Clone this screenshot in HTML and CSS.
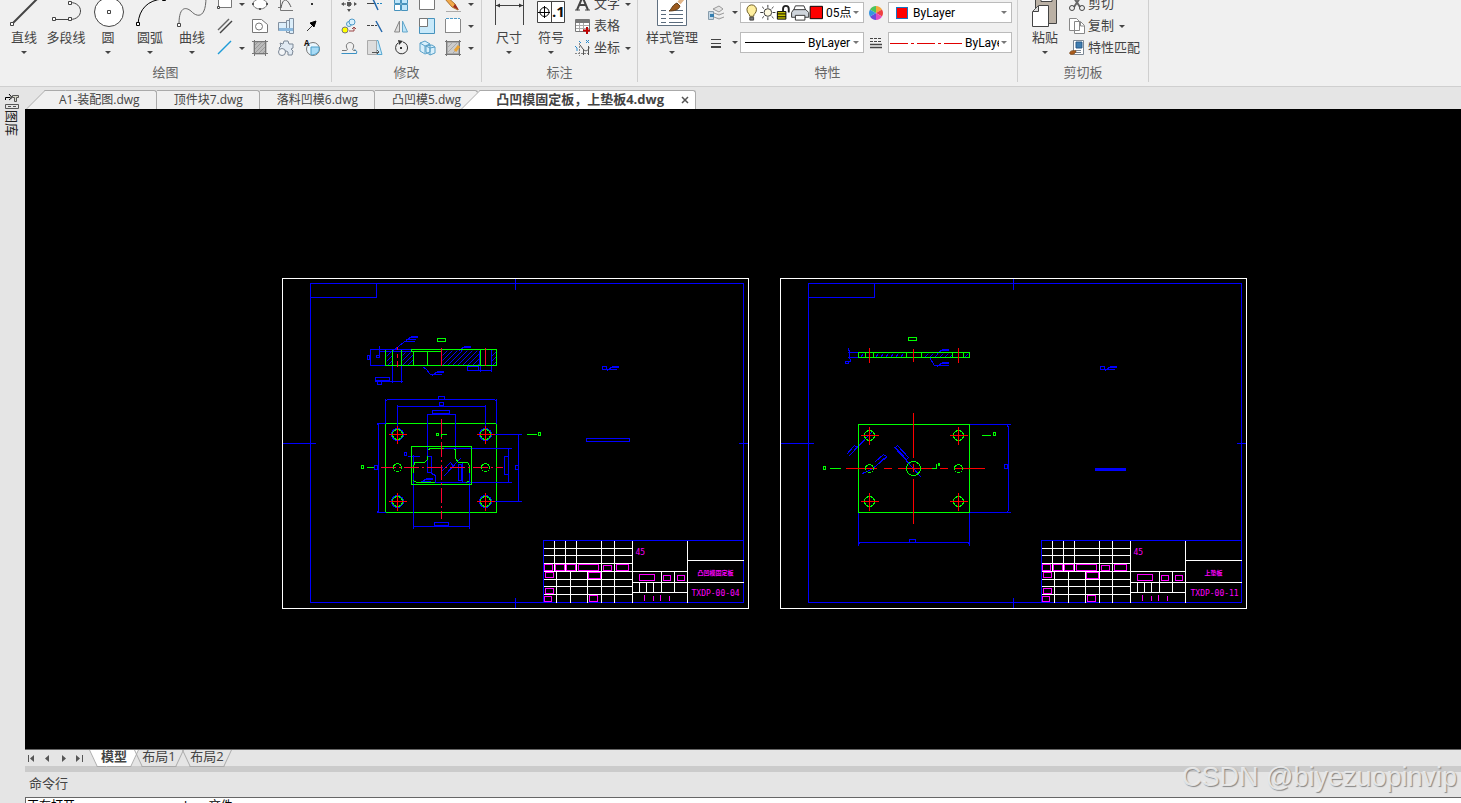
FILE: index.html
```
<!DOCTYPE html>
<html lang="zh-CN">
<head>
  <meta charset="UTF-8">
  <meta name="viewport" content="width=device-width, initial-scale=1.0">
  <title>凸凹模固定板，上垫板4.dwg</title>
  <link rel="stylesheet" href="styles.css">
</head>
<body>
<header class="ribbon">
  <section class="group group-draw">
    <div class="tools">
      <button class="big"><svg viewBox="0 0 42 32"><path d="M9 29L36 2" stroke-width="2"/><path class="node" d="M7.500 27.500h3v3h-3zM34.500 1.500h3v3h-3z"/></svg><span>直线</span><i class="arrow"></i></button>
      <button class="big"><svg viewBox="0 0 42 32"><path d="M9 24.500H25C39 24.500 39 7.500 25 7.500"/><path class="node" d="M7.500 22.500h3v3h-3zM23.500 22.500h3v3h-3zM23.500 6.500h3v3h-3z"/></svg><span>多段线</span></button>
      <button class="big"><svg viewBox="0 0 42 32"><circle cx="22" cy="17" r="14.500" fill="#fff"/><path class="node" d="M20.500 15.500h3v3h-3z"/></svg><span>圆</span><i class="arrow"></i></button>
      <button class="big"><svg viewBox="0 0 42 32"><path d="M9 29C10 14 19 5 34 4" stroke="#000"/><path class="node black" d="M7.500 27.500h3v3h-3zM33.500 2.500h3v3h-3z"/></svg><span>圆弧</span><i class="arrow"></i></button>
      <button class="big"><svg viewBox="0 0 42 32"><path d="M8 29C8 10 16 12 21 17S35 24 35 2" stroke="#666"/><path class="node" d="M6.500 28.500h3v3h-3z"/></svg><span>曲线</span><i class="arrow"></i></button>
      <div class="grid grid-draw">
        <button aria-label="矩形"><svg viewBox="0 0 20 20"><path d="M3.500 2.500h13v11h-13z" fill="#fff" stroke="#777"/><path class="node" d="M2.500 12.500h2v2h-2zM15.500 1.500h2v2h-2z"/></svg></button><i class="arrow"></i>
        <button aria-label="椭圆"><svg viewBox="0 0 20 20"><ellipse cx="10" cy="10" rx="7" ry="5" fill="#fff" stroke="#777"/><path d="M9 14h2v2H9zM16 9h2v2h-2zM2 9h2v2H2z" fill="#555" stroke="none"/></svg></button>
        <button aria-label="公式曲线"><svg viewBox="0 0 20 20"><path d="M4.500 2v14.500H17M2 13.500h3" stroke="#777"/><path d="M5 14C7 3 11 4 15 13" stroke="#555"/></svg></button>
        <button aria-label="点"><svg viewBox="0 0 20 20"><path d="M9 9h2v2H9z" fill="#333" stroke="none"/></svg></button>
        <button aria-label="平行线"><svg viewBox="0 0 20 20"><path d="M3 14L14 3" stroke="#666" stroke-width="1.500"/><path d="M5 17L17 5" stroke="#444" stroke-width="1.500"/></svg></button><i></i>
        <button aria-label="轮廓"><svg viewBox="0 0 20 20"><path d="M2.500 3.500h9l6 5v8h-15z" fill="#fff" stroke="#777"/><circle cx="9" cy="10.500" r="3.500" stroke="#777"/></svg></button>
        <button aria-label="螺栓"><svg viewBox="0 0 20 20"><path d="M2.500 6.500h8v8h-8zM10.500 4.500h3v12h-3zM13.500 2.500h4v15h-4z" fill="#dceefa" stroke="#8290a0"/><path d="M3 12h14v3H3z" fill="#8bb8dd" stroke="none"/></svg></button>
        <button aria-label="箭头"><svg viewBox="0 0 20 20"><path d="M5 15l6-6" stroke="#333"/><path d="M14 5l-2 6-4-4z" fill="#000" stroke="#000"/></svg></button>
        <button aria-label="构造线"><svg viewBox="0 0 20 20"><path d="M3 16L16 3" stroke="#1e9bd7" stroke-width="1.500"/></svg></button><i class="arrow"></i>
        <button aria-label="剖面线"><svg viewBox="0 0 20 20"><path d="M4 4h12v12H4z" fill="#bbb" stroke="#999"/><path d="M4 8l4-4M4 12l8-8M4 16L16 4M8 16l8-8M12 16l4-4" stroke="#999"/><path d="M4.500 2v16M15.500 2v16M2 3.500h16M2 15.500h16" stroke="#777"/></svg></button>
        <button aria-label="齿轮"><svg viewBox="0 0 20 20"><path d="M4 5l3 1 1-3h4l1 3h4v4l-2 1 2 2-1 4h-4v-3c-3-2-5-2-7-1l-2-3 2-2z" fill="#e1eaf3" stroke="#7b8796"/><circle cx="6" cy="14" r="3.500" fill="#f4f6f8" stroke="#7b8796"/></svg></button>
        <button aria-label="局部放大"><svg viewBox="0 0 20 20"><circle cx="11" cy="11" r="6.500" fill="#eaf6fd" stroke="#777"/><path d="M9 9h8c1 5-3 8-8 8z" fill="#a8dbf6" stroke="#4d9fc8"/><text x="2" y="8" class="glyph tiny">A</text></svg></button>
      </div>
    </div>
    <h2>绘图</h2>
  </section>

  <section class="group group-modify">
    <div class="tools">
      <div class="grid grid-modify">
        <button aria-label="移动"><svg viewBox="0 0 20 20"><path d="M10 3v14M3 10h14" stroke="#444" stroke-dasharray="4 2"/><path d="M10 2l2 3H8zM10 18l2-3H8zM2 10l3-2v4zM18 10l-3-2v4zM8 8h4v4H8z" fill="#555" stroke="none"/></svg></button>
        <button aria-label="裁剪"><svg viewBox="0 0 20 20"><path d="M2 9.500h7" stroke="#444"/><path d="M9 9.500h9" stroke="#2788c0" stroke-dasharray="2 1"/><path d="M7 3l6 13" stroke="#2568ac" stroke-width="1.500"/></svg></button>
        <button aria-label="阵列"><svg viewBox="0 0 20 20"><path d="M3.500 3.500h6v6h-6zM10.500 3.500h6v6h-6zM10.500 10.500h6v6h-6z" fill="#bfe6fa" stroke="#4793bd"/><path d="M3.500 10.500h6v6h-6z" fill="#fff" stroke="#4793bd"/></svg></button>
        <button aria-label="圆角"><svg viewBox="0 0 20 20"><path d="M2.500 2.500h15v13h-15z" fill="#fff" stroke="#777"/></svg></button>
        <button aria-label="编辑"><svg viewBox="0 0 20 20"><path d="M3 2l9 8 3 6-6-3-7-8z" fill="#f2a94a" stroke="#ad722f"/><path d="M12 10l4 6-6-3z" fill="#9a2a20" stroke="none"/><path d="M3 17.500h15" stroke="#aaa"/></svg></button><i class="arrow"></i>
        <button aria-label="复制对象"><svg viewBox="0 0 20 20"><circle cx="6" cy="14" r="3" fill="#ff0" stroke="#777"/><circle cx="10" cy="8" r="2.500" fill="#d9f0fc" stroke="#4f9ac7"/><circle cx="13" cy="6" r="3" fill="#d9f0fc" stroke="#4f9ac7"/><path d="M10 15h5v-3M13 13l2-2 2 2" stroke="#9a4545"/></svg></button>
        <button aria-label="延伸"><svg viewBox="0 0 20 20"><path d="M2 9.500h10" stroke="#444" stroke-dasharray="3 1"/><path d="M11 5l6 11" stroke="#2568ac" stroke-width="1.500"/></svg></button>
        <button aria-label="镜像"><svg viewBox="0 0 20 20"><path d="M8.500 5v11h-5z" fill="#ddd" stroke="#888"/><path d="M11.500 5v11h5z" fill="#bde4f8" stroke="#62a6ca"/></svg></button>
        <button aria-label="缩放"><svg viewBox="0 0 20 20"><path d="M2.500 2.500h15v15h-15z" fill="#c8e9fa" stroke="#4793bd"/><path d="M2.500 2.500h8v8h-8z" fill="#fff" stroke="#777"/></svg></button>
        <button aria-label="打断"><svg viewBox="0 0 20 20"><path d="M3 3h14v14H3z" fill="#fff" stroke="none"/><path d="M3 2.500h14" stroke="#4e9bc9" stroke-dasharray="3 1"/><path d="M2.500 3v14M2.500 16.500h15V3" stroke="#888"/></svg></button><i class="arrow"></i>
        <button aria-label="等距线"><svg viewBox="0 0 20 20"><path d="M3 12.500h4c1 0 2-1 1-2-2-4 1-6 3-6s5 2 3 6c-1 1 0 2 1 2h2" stroke="#777"/><path d="M2.500 15.500h15c1-3-1-3-2-4" stroke="#3a91c4"/></svg></button>
        <button aria-label="拉伸"><svg viewBox="0 0 20 20"><path d="M10 2.500h3l4 14h-7" fill="#c8e9fa" stroke="#58a8d1"/><path d="M2.500 2.500h9v14h-9z" fill="#ddd" stroke="#aaa"/><path d="M7 14.500h7M12 12l2 2-2 2" stroke="#555"/></svg></button>
        <button aria-label="旋转"><svg viewBox="0 0 20 20"><path d="M12 4a6 6 0 1 1-5 1" stroke="#333"/><path d="M7 2l5 1-4 4zM9 9h2v2H9z" fill="#333" stroke="none"/></svg></button>
        <button aria-label="倒角"><svg viewBox="0 0 20 20"><path d="M3 5l5-2 5 3v8l-5 2-5-3zM9 8l6-1 3 2v6l-5 2-4-3z" fill="#d8effb" stroke="#5aa1c8"/><path d="M3 5l5 3v7M8 8l5-2M9 8l4 2v7M13 10l5-1" stroke="#5aa1c8"/></svg></button>
        <button aria-label="填充编辑"><svg viewBox="0 0 20 20"><path d="M4 4h12v12H4z" fill="#ccc" stroke="#888"/><path d="M4 10l6-6M4 15L15 4M9 16l7-7" stroke="#aaa"/><path d="M2 3.500h16M3.500 2v16M16.500 2v16M2 16.500h16" stroke="#777"/><path d="M16 8l-4 5" stroke="#e8a335" stroke-width="3"/></svg></button><i class="arrow"></i>
      </div>
    </div>
    <h2>修改</h2>
  </section>

  <section class="group group-note">
    <div class="tools">
      <button class="big"><svg viewBox="0 0 42 32"><path d="M7.500 4v26M35.500 4v26M8 10.500h27"/><path d="M8 10.500l4-2v4zM35 10.500l-4-2v4z" fill="#333" stroke="none"/></svg><span>尺寸</span><i class="arrow"></i></button>
      <button class="big"><svg viewBox="0 0 42 32"><path d="M7.500 6.500h27v21h-27zM21.500 6v21" fill="#fff"/><circle cx="14.500" cy="17" r="4.500" stroke="#000"/><path d="M14.500 11v12M8 17.500h12" stroke="#000"/><text x="22" y="22" class="glyph">.1</text></svg><span>符号</span><i class="arrow"></i></button>
      <div class="rows">
        <button class="row"><svg viewBox="0 0 20 20"><path d="M4 16L9.500 3 15 16M6 11h7" stroke-width="2"/><path d="M2 16h5M12 16h5"/></svg><span>文字</span><i class="arrow"></i></button>
        <button class="row"><svg viewBox="0 0 20 20"><path d="M2.500 3.500h14v12h-14z" fill="#fff" stroke="#777"/><path d="M3 4h13v3H3z" fill="#777" stroke="none"/><path d="M3 9.500h13M3 12.500h13M6.500 7v8M10.500 7v8" stroke="#aaa"/><path d="M14 11v7M10 14.500h7" stroke="#c00000" stroke-width="2"/></svg><span>表格</span></button>
        <button class="row"><svg viewBox="0 0 20 20"><path d="M6.500 5v13M2 15.500h15" stroke="#888" stroke-dasharray="2 1"/><path d="M7 7l3 4c2 3 6 2 6-2M10.500 11v6M15.500 8v9" stroke="#555"/><path d="M6 3l2 2M13 2l3 3M16 2l-3 3M2 8l2 2v3" stroke="#2a8acc"/></svg><span>坐标</span><i class="arrow"></i></button>
      </div>
    </div>
    <h2>标注</h2>
  </section>

  <section class="group group-prop">
    <div class="tools">
      <button class="big wide"><svg viewBox="0 0 42 32"><path d="M6.500 3.500h29v27h-29z" fill="#fff" stroke="#607080"/><path d="M10 15.500h5M10 19.500h5M10 23.500h5M10 27.500h5M18 15.500h14M18 19.500h14M18 23.500h14M18 27.500h14" stroke="#5a6b7c"/><path d="M18 16c3-2 3-6 8-8l3 3c-1 4-6 5-11 5z" fill="#9b591d" stroke="#60401d"/><path d="M28 8L34 1" stroke="#e1b588" stroke-width="4"/></svg><span>样式管理</span><i class="arrow"></i></button>
      <div class="props">
        <button aria-label="图层"><svg viewBox="0 0 20 20"><path d="M7 6l6-3 4 3-4 3zM8 10l5 2 5-2M8 14l5 2 5-2" fill="#e4e4e4" stroke="#999"/><path d="M2.500 8.500h5v8h-5z" fill="#c6d9e6" stroke="#889cab"/><path d="M4 11h4v3H4z" fill="#367fb0" stroke="none"/></svg></button>
        <i class="arrow"></i>
        <div class="combo">
          <svg class="layer-icons" viewBox="0 0 80 20">
            <path d="M4 14c0-3-3-3-3-7a5 5 0 0 1 10 0c0 4-3 4-3 7z" fill="#ffef9f" stroke="#665520"/><path d="M4 15h4v3H4z" fill="#777" stroke="#444"/>
            <circle cx="23" cy="10" r="4" fill="#fffbe0" stroke="#333"/><path d="M23 2v3M23 15v3M15 10h3M28 10h3M17 4l2 2M27 14l2 2M29 4l-2 2M19 14l-2 2" stroke="#333"/>
            <path d="M33 9h9v8h-9z" fill="#c8c400" stroke="#000"/><path d="M33 11.500h9M33 14.500h9" stroke="#000"/><path d="M39 9V6c0-4 6-4 6 0v4" stroke="#222" stroke-width="2"/>
            <path d="M52 3h9l2 5H50z" fill="#fff" stroke="#333"/><path d="M50 7h13l3 3v5H48v-5z" fill="#cfd5dc" stroke="#333"/><path d="M52 13h10v5H52z" fill="#fff" stroke="#333"/>
            <path d="M67.500 3.500h13v13h-13z" fill="#f00" stroke="#000"/>
          </svg>
          <select aria-label="当前图层"><option>05点画线</option></select><i class="arrow"></i>
        </div>
        <svg class="wheel" viewBox="0 0 20 20"><path d="M10 10V3a7 7 0 0 1 6 3.500z" fill="#f5a83c"/><path d="M10 10l6-3.500a7 7 0 0 1 0 7z" fill="#ef4040"/><path d="M10 10l6 3.500a7 7 0 0 1-6 3.500z" fill="#e44bc0"/><path d="M10 10v7a7 7 0 0 1-6-3.500z" fill="#6b4bdb"/><path d="M10 10l-6 3.500a7 7 0 0 1 0-7z" fill="#3795e2"/><path d="M10 10L4 6.500A7 7 0 0 1 10 3z" fill="#4bc45c"/></svg>
        <div class="combo"><span class="swatch"></span><select aria-label="颜色"><option>ByLayer</option></select><i class="arrow"></i></div>
        <button aria-label="线宽"><svg viewBox="0 0 20 20"><path d="M5 6.500h10M5 10.500h10" /><path d="M5 14h10" stroke-width="2"/></svg></button>
        <i class="arrow"></i>
        <div class="combo"><svg class="line" viewBox="0 0 60 20"><path d="M0 9.500h60" stroke="#000"/></svg><select aria-label="线宽样式"><option>ByLayer</option></select><i class="arrow"></i></div>
        <svg viewBox="0 0 20 20"><path d="M4 5.500h12M4 8.500h12" stroke-dasharray="3 1"/><path d="M4 11.500h12M4 14.500h12" stroke-width="1.500"/></svg>
        <div class="combo flush"><svg class="line long" viewBox="0 0 72 20"><path d="M0 10.500h72" stroke="#e00000" stroke-dasharray="18 3 3 3"/></svg><select aria-label="线型"><option>ByLayer</option></select><i class="arrow"></i></div>
      </div>
    </div>
    <h2>特性</h2>
  </section>

  <section class="group group-clip">
    <div class="tools">
      <button class="big"><svg viewBox="0 0 42 32"><path d="M11.500 2.500h21v26h-21z" fill="#bbb1a5"/><path d="M17 2v4.500h11V2" fill="#fff"/><path d="M14.500 10.500h10v21h-16v-15z" fill="#fff"/><path d="M9 16.500h5.500V11" fill="#ddd"/></svg><span>粘贴</span><i class="arrow"></i></button>
      <div class="rows">
        <button class="row"><svg viewBox="0 0 20 20"><path d="M5 1l8 12M15 1L7 13" stroke="#666" stroke-width="2"/><circle cx="5" cy="14" r="2.500" stroke="#444"/><circle cx="15" cy="14" r="2.500" stroke="#444"/></svg><span>剪切</span></button>
        <button class="row"><svg viewBox="0 0 20 20"><path d="M2.500 2.500h7l3 3v9h-10zM7.500 5.500h6l4 4v8h-10z" fill="#fff" stroke="#888"/><path d="M13.500 6v4H17" stroke="#888"/></svg><span>复制</span><i class="arrow"></i></button>
        <button class="row"><svg viewBox="0 0 20 20"><path d="M6.500 2.500h10v14h-10z" fill="#fff" stroke="#7b8794"/><path d="M9 4h6v6H9z" fill="#3e7db1" stroke="#285a89"/><path d="M8 12.500h6M8 14.500h6" stroke="#7b8794"/><path d="M3 16c-1-3 3-4 6-3-1 3-3 4-6 3z" fill="#ac5c1b" stroke="#815025"/></svg><span>特性匹配</span></button>
      </div>
    </div>
    <h2>剪切板</h2>
  </section>
</header>

<div class="workspace">
  <aside class="sidebar">
    <button class="library">
      <svg viewBox="0 0 16 18"><path d="M1.500 8V5.500h5M5 2l3 3.500L5 8" stroke="#000"/><path d="M8.500 3.500h6v2h-2v4h-2v-4h-2z" fill="#d8d8c8" stroke="#555"/><path d="M1.500 12.500h13v4h-13zM4 14.500h3M9 14.500h3" stroke="#555"/></svg>
      <span>图库</span>
    </button>
  </aside>
  <main class="main">
    <nav class="file-tabs">
      <button class="file-tab first">A1-装配图.dwg</button>
      <button class="file-tab">顶件块7.dwg</button>
      <button class="file-tab">落料凹模6.dwg</button>
      <button class="file-tab">凸凹模5.dwg</button>
      <button class="file-tab active">凸凹模固定板，上垫板4.dwg</button>
      <button class="close" aria-label="关闭"><svg viewBox="0 0 8 8"><path d="M1 1l6 6M7 1L1 7" stroke="#555" stroke-width="1.500"/></svg></button>
    </nav>

    <div class="canvas">
      <svg viewBox="25 109 1436 640" shape-rendering="crispEdges">
        <defs>
          <clipPath id="cut-left"><path d="M386 350h6v15h-6zM402 352h11v13h-11zM442 350h38v15h-38zM491 350h5v15h-5z"/></clipPath>
          <clipPath id="cut-right"><path d="M859 353h6v4h-6zM874 353h32v4h-32zM922 353h30v4h-30zM963 353h6v4h-6z"/></clipPath>
          <g id="flag"><path class="b" d="M0 3h10M3 1h9M5 0h7M1 4l5-4"/></g>
          <g id="hole"><circle class="g" r="5"/><path class="r" d="M-9 0h18M0-9v18"/></g>
          <g id="sheet">
            <path class="b" d="M310 283h433v319H310zM310 297h66v-14M515 278v11M515 597v11M282 443h33M738 443h10"/>
            <path class="w" d="M282 278h466v330H282z"/>
            <path class="b" d="M543 602v-62h200"/>
            <path class="w" d="M554 540v31M565 540v31M576 540v31M601 540v62M614 540v62M632 540v62M687 540v62M556 571v31M570 571v31M587 571v31M543 548h89M543 555h89M543 563h89M543 571h144M543 579h89M543 586h89M543 594h89M632 582h111M632 592h55M687 560h56M661 571v21M674 571v21M639 582v10M646 582v10M653 582v10"/>
            <path class="m" d="M544 564h8v6h-8zM555 564h9v6h-9zM566 564h9v6h-9zM578 564h20v6h-20zM603 565h8v5h-8zM616 564h12v6h-12zM545 572h8v5h-8zM588 572h12v6h-12zM545 588h8v5h-8zM544 596h7v5h-7zM589 595h8v6h-8zM639 574h15v6h-15zM663 575h7v5h-7zM677 575h7v5h-7zM644 594v6M653 595v5M660 594v6M669 595v5"/>
            <text class="cad" x="635" y="554">45</text>
          </g>
        </defs>
        <g transform="translate(.5 .5)">
          <use href="#sheet"/>
          <use href="#sheet" x="498"/>
          <text class="cad name" x="715" y="574">凸凹模固定板</text>
          <text class="cad" x="691" y="595">TXDP-00-04</text>
          <text class="cad name" x="1213" y="574">上垫板</text>
          <text class="cad" x="1190" y="595">TXDP-00-11</text>

          <!-- 凸凹模固定板: section -->
          <g clip-path="url(#cut-left)"><path class="b" d="M377 365l15-15M382 365l15-15M387 365l15-15M392 365l15-15M397 365l15-15M402 365l15-15M407 365l15-15M427 365l15-15M432 365l15-15M437 365l15-15M442 365l15-15M447 365l15-15M452 365l15-15M457 365l15-15M462 365l15-15M467 365l15-15M472 365l15-15M477 365l15-15M482 365l15-15M487 365l15-15M492 365l15-15"/></g>
          <path class="b" d="M369 349h42M378 351h33M369 365h16M370 349v16M379 345v12M376 355h3v2h-3zM367 355h2v4h-2zM392 351l12-10h10M423 367l2 1 5 6h10M461 350v-3M392 365v17M401 365v17M374 381h28M375 377h14v3h-14zM377 381h4v3h-4zM480 365v6M491 349v22M468 370h23M467 366h11v4h-11zM479 350v15"/>
          <use href="#flag" x="405" y="336"/><use href="#flag" x="431" y="371"/><use href="#flag" x="458" y="346"/>
          <path class="g" d="M385 365h111v-16h-85v2h30M385 349v16M392 349v16M401 349v16M413 351v14M427 351v14M480 349v16M437 338h8v3h-8z"/>
          <path class="p" d="M397 346v3M397 353v4M397 360v6M441 347v18M485 347v18"/>

          <!-- 凸凹模固定板: plan -->
          <path class="g" d="M385 423h111v89H385z"/>
          <path class="b" d="M385 423v-25M496 423v-25M385 400l3-1h105l3 1M438 396h6v3h-6zM397 434v-30M485 434v-30M397 406h88M439 402h4v3h-4zM427 413v59M455 413v36M427 414h28M432 410h17v3h-17zM376 423h9M376 512h9M377 423l1 2v85l-1 2M374 465h3v4h-3zM485 434h36M485 501h36M518 434v67M515 465h3v4h-3zM441 448h70M434 482h77M508 448v34M504 456h4v18h-4zM413 454v74M469 471v57M413 526h56M434 522h14v3h-14zM407 456h12M404 452h2v3h-2zM427 456h4v16h-4zM431 473l4 2v7M434 467h8M440 472l10-10 3 4-9 9M443 476l17-18M458 464h3v16h-3zM462 462v20"/>
          <use href="#flag" x="420" y="478"/>
          <circle class="b" cx="397" cy="434" r="6"/><circle class="b" cx="485" cy="434" r="6"/><circle class="b" cx="397" cy="501" r="6"/><circle class="b" cx="485" cy="501" r="6"/>
          <path class="g" d="M411 446h60v38h-60zM443 448h-14l-1 2M427 455v4l-3 3h-10l-1 5v5M413 480l3 2h18M466 482l3-2M453 449h2v9l3 4h9l2 3v7M366 467h7M361 465h2v3h-2zM526 434h10M538 432h2v3h-2zM436 433h2v2h-2zM446 434h-5v4"/>
          <path class="p" d="M380 467h122M441 418v100" stroke-dasharray="15 3 2 3"/>
          <circle class="g" cx="397" cy="467" r="4"/><circle class="g" cx="485" cy="467" r="4"/>
          <use href="#hole" x="397" y="434"/><use href="#hole" x="485" y="434"/><use href="#hole" x="397" y="501"/><use href="#hole" x="485" y="501"/>
          <path class="b" d="M602 366h4v3h-4zM586 438h43v3h-43z"/>
          <use href="#flag" x="606" y="366"/>

          <!-- 上垫板: section -->
          <g clip-path="url(#cut-right)"><path class="b" d="M860 357l3-4M875 357l3-4M880 357l3-4M885 357l3-4M890 357l3-4M895 357l3-4M900 357l3-4M924 357l4-4M929 357l4-4M934 357l4-4M939 357l4-4M944 357l4-4M949 357l4-4M964 357l4-4"/></g>
          <path class="b" d="M847 352h11M847 357h11M848 348l1 4v5l1 3-1 2M845 361h3v2h-3zM929 357l5 8h14M940 352v-2"/>
          <use href="#flag" x="936" y="349"/><use href="#flag" x="936" y="362"/>
          <path class="g" d="M858 352h111v5H858zM865 352v5M873 352v5M906 352v5M921 352v5M952 352v5M963 352v5M908 337h8v3h-8z"/>
          <path class="r" d="M869 347v15M913 348v13M958 347v15"/>

          <!-- 上垫板: plan -->
          <path class="b" d="M969 424h41M969 512h41M1007 425l1 2v82l-1 3M1004 464h3v4h-3zM858 512v33M969 512v33M858 543l2-1h107l2 1M909 539h6v3h-6zM848 456l24-25M846 454l8-9 3 2-9 9M862 473l9-4 16-13M875 461l8-7 3 2-9 8M894 447l27 30M895 447l2-2 11 12-2 2z"/>
          <path class="g" d="M858 424h111v88H858zM931 468h5v-5M938 463h1v2h-1zM981 435h9M993 432h2v3h-2zM829 468h11M823 466h2v3h-2z"/>
          <path class="r" d="M845 468h31M883 468h8M897 468h34M939 468h8M953 468h31M913 412v45M913 463v8M913 478v45"/>
          <circle class="g" cx="869" cy="468" r="4"/><circle class="g" cx="958" cy="468" r="4"/><circle class="g" cx="913" cy="468" r="7"/>
          <use href="#hole" x="869" y="435"/><use href="#hole" x="958" y="435"/><use href="#hole" x="869" y="501"/><use href="#hole" x="958" y="501"/>
          <path class="b" d="M1100 366h4v3h-4zM1095 468h30v2h-30zM1095 469h30"/>
          <use href="#flag" x="1104" y="366"/>
        </g>
      </svg>
    </div>

    <nav class="layout-tabs">
      <button class="step" aria-label="第一个"><svg viewBox="0 0 8 8"><path d="M1.500 1v7" stroke="#555"/><path d="M7 1v7L3 4.500z" fill="#555" stroke="none"/></svg></button>
      <button class="step" aria-label="上一个"><svg viewBox="0 0 8 8"><path d="M6 1v7L2 4.500z" fill="#555" stroke="none"/></svg></button>
      <button class="step" aria-label="下一个"><svg viewBox="0 0 8 8"><path d="M3 1v7l4-3.500z" fill="#555" stroke="none"/></svg></button>
      <button class="step" aria-label="最后一个"><svg viewBox="0 0 8 8"><path d="M7.500 1v7" stroke="#555"/><path d="M1 1v7l4-3.500z" fill="#555" stroke="none"/></svg></button>
      <button class="layout-tab active">模型</button>
      <button class="layout-tab">布局1</button>
      <button class="layout-tab">布局2</button>
    </nav>
    <section class="command">
      <h2>命令行</h2>
      <div class="log"><span>正在打开</span><span>dwg 文件</span></div>
    </section>
  </main>
</div>
<div class="watermark">CSDN @biyezuopinvip</div>
</body>
</html>
```
FILE: styles.css
```
:root {
  --ribbon: #f0f0f0;
  --chrome: #e5e5e5;
  --line: #cfcfcf;
  --text: #444;
}
* { box-sizing: border-box; }
body {
  margin: 0;
  height: 100vh;
  display: flex;
  flex-direction: column;
  overflow: hidden;
  background: var(--chrome);
  color: var(--text);
  font: 13px/20px "Open Sans", "Noto Sans CJK SC", sans-serif;
}
button {
  margin: 0;
  padding: 0;
  border: none;
  background: none;
  color: inherit;
  font: inherit;
  white-space: nowrap;
}
svg {
  display: block;
  flex: none;
  fill: none;
  stroke: #444;
}
h2 {
  margin: 0;
  font-size: 13px;
  font-weight: normal;
}

/* ribbon, its upper edge is scrolled out of the window */
.ribbon {
  display: flex;
  flex: none;
  height: 99px;
  margin-top: -12px;
  background: var(--ribbon);
  border-bottom: 1px solid var(--line);
}
.group {
  flex: none;
  border-right: 1px solid var(--line);
  margin-bottom: 4px;
}
.group h2 {
  text-align: center;
  line-height: 20px;
  color: #666;
  padding-top: 3px;
}
.tools {
  display: flex;
  align-items: flex-end;
  height: 71px;
  padding-left: 6px;
}
.group-draw { width: 332px; }
.group-modify { width: 150px; }
.group-note { width: 156px; }
.group-prop { width: 380px; }
.group-clip { width: 131px; }
.group-draw .tools { padding-left: 3px; }
.group-modify .tools { padding-left: 4px; }
.big {
  width: 42px;
  height: 66px;
  display: flex;
  flex-direction: column;
  align-items: center;
}
.big svg { width: 42px; height: 32px; margin-top: 2px; }
.big.wide { width: 56px; }
.big .arrow { margin-top: 4px; }
.node { fill: #fff; }
.black { stroke: #000; }
.arrow {
  width: 0;
  height: 0;
  flex: none;
  border: 3px solid transparent;
  border-top-color: #444;
  border-bottom: none;
}
.glyph {
  font: bold 15px "Open Sans", sans-serif;
  fill: #111;
  stroke: none;
}
.glyph.tiny { font-size: 8px; }
.grid {
  display: grid;
  grid-auto-rows: 22px;
  align-items: center;
  justify-items: center;
}
.grid-draw { grid-template-columns: 24px 10px 26px 26px 26px; }
.grid-modify { grid-template-columns: repeat(5, 26px) 9px; }
.grid svg, .row svg, .props > svg, .props > button svg { width: 20px; height: 20px; }
.rows { padding-left: 1px; }
.row {
  display: flex;
  align-items: center;
  height: 22px;
  gap: 1px;
}
.row span { padding-bottom: 2px; }
.row .arrow { margin-left: 4px; }
.props {
  display: grid;
  grid-template-columns: 28px 10px 124px 24px 124px;
  grid-auto-rows: 21px;
  row-gap: 9px;
  align-items: center;
  justify-items: center;
  padding-bottom: 6px;
  padding-left: 2px;
}
.props .wheel { stroke: none; }
.combo {
  display: flex;
  align-items: center;
  width: 100%;
  height: 21px;
  padding: 0 4px;
  background: #fff;
  border: 1px solid #bbb;
}
.combo.flush { padding-left: 1px; }
.combo select {
  appearance: none;
  flex: 1;
  min-width: 0;
  margin-right: 2px;
  padding: 0 0 0 3px;
  border: none;
  background: none;
  color: #000;
  font: 12px/18px Roboto, "Noto Sans CJK SC", sans-serif;
}
.combo .arrow { border-top-color: #777; }
.layer-icons { width: 78px; height: 19px; }
.line { width: 60px; height: 20px; }
.line.long { width: 72px; }
.swatch {
  width: 12px;
  height: 12px;
  margin: 0 2px 0 3px;
  background: #f00;
  border: 1px solid #1674c4;
}

.workspace {
  display: flex;
  flex: 1;
  min-height: 0;
}
.sidebar {
  width: 25px;
  flex: none;
  padding: 5px 0 0 4px;
}
.library svg { width: 16px; height: 18px; }
.library span {
  display: block;
  writing-mode: vertical-rl;
  text-orientation: sideways;
  font-size: 13px;
  line-height: 16px;
  color: #222;
}
.main {
  flex: 1;
  min-width: 0;
  display: flex;
  flex-direction: column;
}

/* open drawings */
.file-tabs {
  display: flex;
  align-items: flex-end;
  flex: none;
  height: 22px;
}
.file-tab {
  position: relative;
  z-index: 0;
  height: 19px;
  padding: 0 16px 1px 17px;
  font-size: 12px;
  line-height: 16px;
  background: var(--ribbon);
  border: 1px solid #aaa;
  border-width: 1px 1px 0 0;
  border-radius: 0 3px 0 0;
}
.file-tab.first {
  margin-left: 20px;
  padding-left: 14px;
}
.file-tab.active {
  z-index: 1;
  margin-left: 2px;
  padding: 0 31px 3px 16px;
  background: #fff;
  font-size: 13px;
  font-weight: bold;
}
.file-tab.first::before, .file-tab.active::before {
  content: "";
  position: absolute;
  z-index: -1;
  left: -10px;
  top: -1px;
  width: 20px;
  height: 19px;
  background: inherit;
  border: 1px solid #aaa;
  border-width: 1px 0 0 1px;
  transform: skewX(-45deg);
}
.close {
  z-index: 2;
  width: 8px;
  height: 19px;
  margin-left: -15px;
}
.close svg { width: 8px; height: 8px; }

.canvas {
  position: relative;
  z-index: 2;
  flex: 1;
  min-height: 0;
  background: #000;
}
.canvas svg { width: 100%; height: 100%; stroke: none; }
.w { stroke: #fff; }
.b { stroke: #00f; }
.g { stroke: #0f0; }
.r { stroke: #f00; }
.p { stroke: #ff0033; }
.m { stroke: #f0f; }
.cad {
  fill: #f0f;
  font: 8px "DejaVu Sans Mono", monospace;
}
.cad.name {
  font: bold 6px "Noto Sans CJK SC", sans-serif;
  text-anchor: middle;
}

/* model and layout tabs */
.layout-tabs {
  display: flex;
  flex: none;
  height: 17px;
  border-top: 1px solid #666;
  padding-left: 1px;
}
.step {
  width: 16px;
  height: 16px;
  padding-left: 1px;
}
.step svg { width: 8px; height: 8px; }
.layout-tab {
  position: relative;
  z-index: 0;
  width: 48px;
  height: 16px;
  line-height: 12px;
  padding-bottom: 4px;
}
.layout-tab::before, .layout-tab::after {
  content: "";
  position: absolute;
  z-index: -1;
  top: 0;
  width: 50%;
  height: 16px;
  border-bottom: 1px solid #aaa;
}
.layout-tab::before {
  left: 3px;
  border-left: 1px solid #aaa;
  transform: skewX(25deg);
}
.layout-tab::after {
  right: 3px;
  border-right: 1px solid #aaa;
  transform: skewX(-25deg);
}
.layout-tab.active {
  margin-right: -3px;
  font-weight: bold;
}
.layout-tab.active::before, .layout-tab.active::after { background: #fff; }

.command {
  flex: none;
  border-top: 6px solid #cbcbcb;
}
.command h2 {
  padding: 0 0 3px 4px;
  line-height: 22px;
}
.log {
  display: flex;
  gap: 105px;
  height: 6px;
  overflow: hidden;
  padding: 0 1px;
  background: #fff;
  border-top: 1px solid #666;
  border-left: 1px solid #666;
  color: #000;
  font: 12px/18px "Liberation Mono", "Noto Sans CJK SC", monospace;
}
.watermark {
  position: absolute;
  right: 4px;
  bottom: 11px;
  color: rgba(238, 238, 238, 0.9);
  font: 27px/30px "Liberation Sans", sans-serif;
  text-shadow: 1px 1px 1px #888;
  pointer-events: none;
}
```
